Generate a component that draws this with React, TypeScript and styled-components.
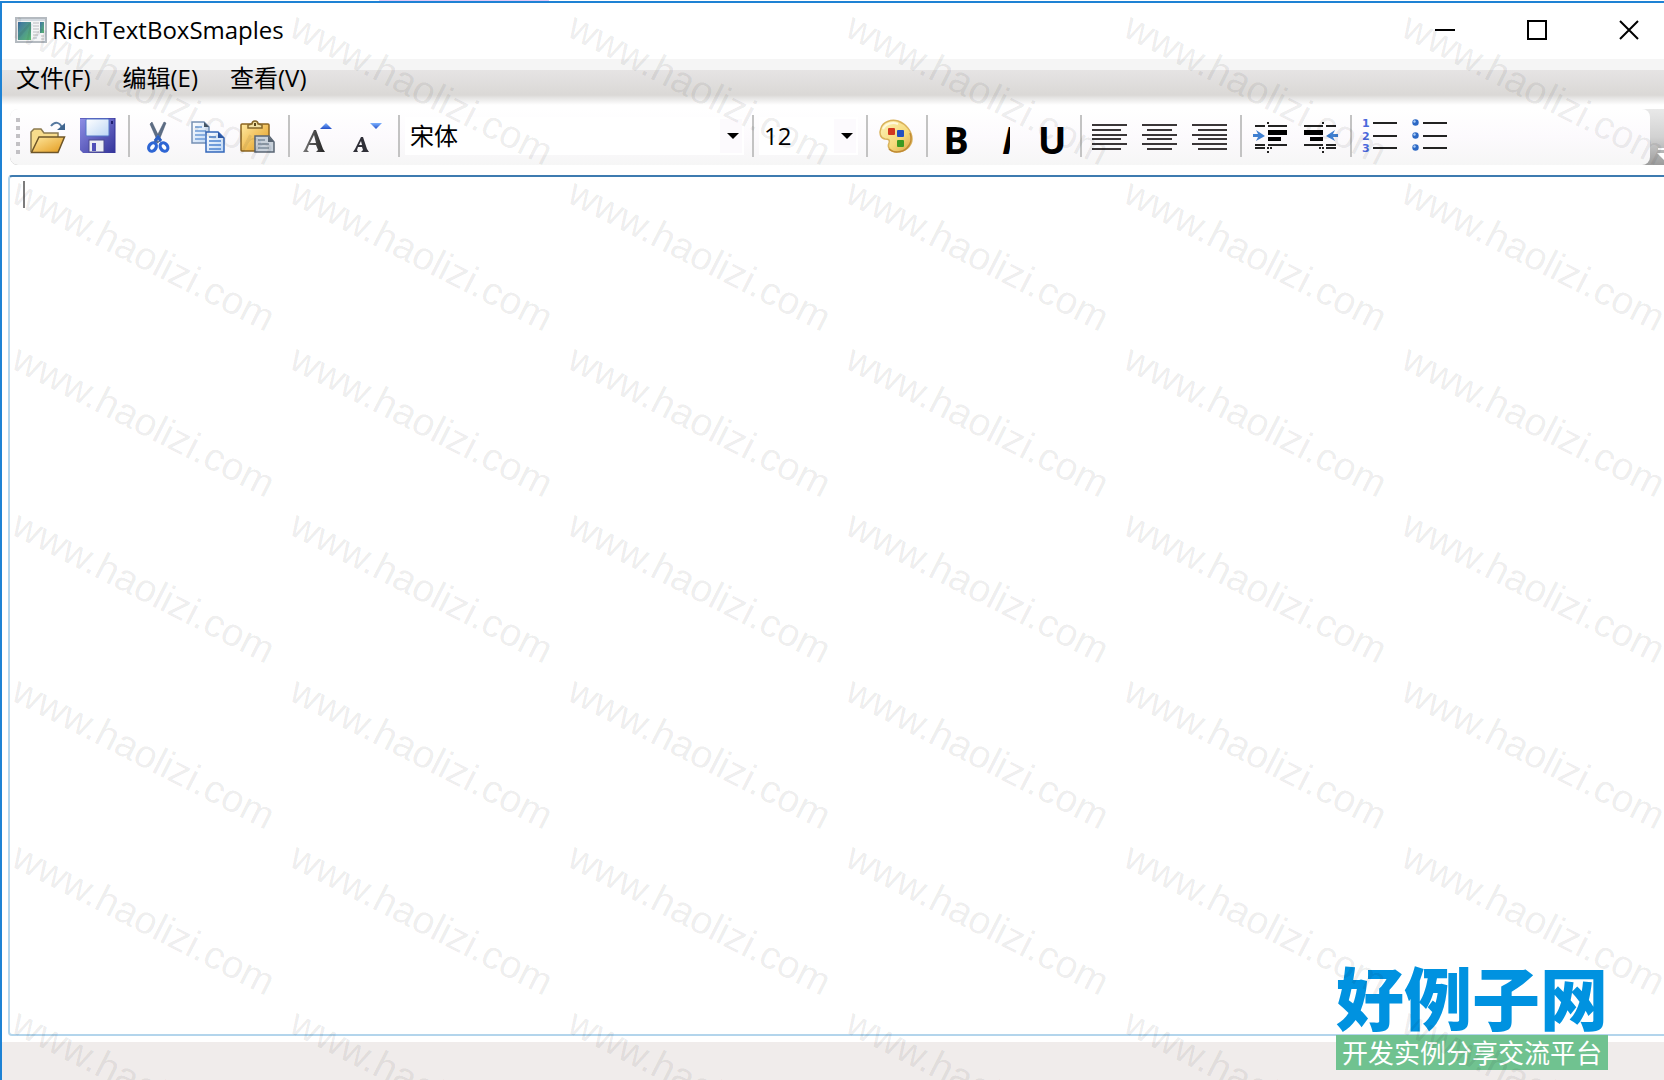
import React from 'react';
import styled, { createGlobalStyle } from 'styled-components';

const uiFont = '"Open Sans", "Noto Sans CJK SC", sans-serif';

const GlobalStyle = createGlobalStyle`
  *, *::before, *::after { box-sizing: border-box; }
  html, body { margin: 0; overflow: hidden; background: #fff; }
  body, button, select, textarea { font-family: ${uiFont}; font-size: 24px; color: #000; }
  button { border: 0; padding: 0; margin: 0; background: transparent; }
`;

const Desktop = styled.div`
  position: relative;
  height: 100vh;
  overflow: hidden;
  background: linear-gradient(#e2c9f5, #e2c9f5) 379px 0 / 170px 1px no-repeat #fff;
  padding-top: 1px;
`;

const Window = styled.div`
  display: flex;
  flex-direction: column;
  height: 100%;
  margin-right: -11px;
  border-top: 2px solid #1e82d4;
  border-left: 2px solid #1e82d4;
  background: #fff;
`;

const TitleBar = styled.header`
  display: flex;
  align-items: center;
  flex: none;
  height: 56px;
  padding: 0 0 2px 13px;
`;

const Title = styled.h1`
  flex: 1;
  margin: 0 0 0 5px;
  font-size: 24px;
  line-height: 32px;
  font-weight: 400;
`;

const CaptionButton = styled.button`
  display: grid;
  place-items: center;
  width: 92px;
  height: 54px;
`;

const MenuBar = styled.nav`
  display: flex;
  flex: none;
  height: 46px;
  padding: 0 0 8px 0;
  background: linear-gradient(#f5f5f5 0, #f5f5f5 11px, #e6e4e4 11px, #dad8d6 36px, #e6e5e4 39px, #fff 46px);
`;

const MenuItem = styled.button`
  padding: 0 18px 0 14px;
  line-height: 38px;
  white-space: nowrap;
`;

const ToolTray = styled.div`
  display: flex;
  flex: none;
  padding: 4px 0 10px 8px;
`;

const ToolBar = styled.div`
  display: flex;
  flex: 1;
  background: linear-gradient(#e9e9e9, #d2d2d2 50%, #9c9c9c);
  border-radius: 8px 0 0 8px;
`;

const ToolStrip = styled.div`
  display: flex;
  flex: 1;
  align-items: center;
  height: 56px;
  padding: 0 0 2px 6px;
  border-radius: 8px;
  background: linear-gradient(#fff, #fcfafd 50%, #f6f6f6);
`;

const Overflow = styled.button`
  display: grid;
  align-items: end;
  justify-items: start;
  width: 25px;
  padding: 0 0 3px 7px;
`;

const Grip = styled.div`
  display: grid;
  gap: 4px;
  margin-right: 3px;
  i { display: block; width: 4px; height: 4px; background: #c2c0c4; }
`;

const Divider = styled.div`
  flex: none;
  width: 2px;
  height: 42px;
  margin: 0 3px 0 5px;
  background: #c3c3c3;
`;

const ToolButton = styled.button<{ $letter?: boolean }>`
  display: grid;
  place-items: center;
  flex: none;
  width: ${(p) => (p.$letter ? 48 : 50)}px;
  height: 48px;
  font-size: 38px;
  line-height: 40px;
  font-weight: 700;
`;

const Letter = styled.span`
  margin: 6px 0 0 2px;
`;

const ClippedLetter = styled(Letter)`
  width: 12px;
  padding-left: 4px;
  overflow: hidden;
  font-style: italic;
`;

const Combo = styled.label<{ $width: number }>`
  display: grid;
  align-items: center;
  width: ${(p) => p.$width}px;
  padding: 0 3px 0 2px;
  > * { grid-area: 1 / 1; }
  svg { justify-self: end; margin-right: 5px; pointer-events: none; }
`;

const Select = styled.select`
  appearance: none;
  width: 100%;
  height: 38px;
  padding: 0 28px 2px 5px;
  border: 0;
  border-radius: 0;
  background: linear-gradient(#fcfafd, #fcfafd) right 2px center / 22px 34px no-repeat #fff;
`;

const EditorArea = styled.main`
  position: relative;
  display: flex;
  flex: 1;
  padding: 0 0 6px 6px;
`;

const Editor = styled.textarea`
  flex: 1;
  padding: 4px 12px;
  border: 2px solid #b3d5ec;
  border-top-color: #3e7bb0;
  border-radius: 4px;
  outline: 0;
  resize: none;
  background: #fff;
`;

const Caret = styled.i`
  position: absolute;
  left: 21px;
  top: 6px;
  width: 2px;
  height: 27px;
  background: #7c7c7c;
`;

const StatusBar = styled.footer`
  flex: none;
  height: 38px;
  background: #f0eceb;
`;

const Badge = styled.aside`
  position: absolute;
  right: 56px;
  bottom: 10px;
  width: 272px;
  text-align: center;
  font-family: "Noto Sans CJK SC", sans-serif;
  white-space: nowrap;
`;

const BadgeName = styled.div`
  font-size: 68px;
  line-height: 78px;
  font-weight: 900;
  color: #0092e0;
`;

const BadgeTag = styled.div`
  padding-bottom: 1px;
  font-size: 26px;
  line-height: 34px;
  color: #fff;
  background: #70c290;
`;

const Watermarks = styled.div`
  position: absolute;
  inset: 0;
  display: grid;
  grid-template-columns: repeat(6, 278px);
  grid-auto-rows: 166px;
  pointer-events: none;
  overflow: hidden;
`;

const Watermark = styled.span`
  padding-left: 8px;
  font: 39px/44px "Liberation Sans", sans-serif;
  color: rgba(0, 0, 0, 0.08);
  white-space: nowrap;
  transform: rotate(27deg);
  transform-origin: 8px 38px;
`;

const Art = ({ children, size = 36 }: { children: React.ReactNode; size?: number }) => (
  <svg width={size} height={size} viewBox={`0 0 ${size} ${size}`} aria-hidden="true">
    <defs>
      <linearGradient id="gold" x1="0" y1="0" x2="1" y2="1">
        <stop offset="0" stopColor="#ffe9a0" /><stop offset="1" stopColor="#e39a1c" />
      </linearGradient>
      <linearGradient id="cream" x1="0" y1="0" x2="1" y2="1">
        <stop offset="0" stopColor="#fdf3b8" /><stop offset=".6" stopColor="#f6da7c" /><stop offset="1" stopColor="#d9a440" />
      </linearGradient>
      <linearGradient id="violet" x1="0" y1="0" x2="1" y2="1">
        <stop offset="0" stopColor="#8f8fe6" /><stop offset="1" stopColor="#34349a" />
      </linearGradient>
      <linearGradient id="sheet" x1="0" y1="0" x2="1" y2="1">
        <stop offset="0" stopColor="#fff" /><stop offset="1" stopColor="#bcd6f5" />
      </linearGradient>
      <linearGradient id="blue" x1="0" y1="0" x2="0" y2="1">
        <stop offset="0" stopColor="#7db2ff" /><stop offset="1" stopColor="#2450c8" />
      </linearGradient>
      <linearGradient id="ink" x1="0" y1="0" x2="1" y2="0">
        <stop offset="0" stopColor="#777" /><stop offset="1" stopColor="#222" />
      </linearGradient>
    </defs>
    {children}
  </svg>
);

const AppIcon = () => (
  <svg width="32" height="26" viewBox="0 0 32 26" aria-hidden="true">
    <defs>
      <linearGradient id="pane" x1="0" y1="0" x2="1" y2="1">
        <stop offset="0" stopColor="#3f72a4" /><stop offset="1" stopColor="#5cba74" />
      </linearGradient>
    </defs>
    <rect x="1" y="1" width="30" height="24" fill="#f4f5f6" stroke="#b4bac0" strokeWidth="2" />
    <path d="M2 3h28" stroke="#d2d9e0" strokeWidth="2" />
    <rect x="3" y="5" width="13" height="18" fill="url(#pane)" />
    <path d="M18 6h6M18 9h6M18 12h6M18 15h6M18 18h5M18 21h4M26 19h3M26 22h3" stroke="#b9bcc0" />
    <rect x="25" y="5" width="4" height="11" fill="url(#pane)" />
  </svg>
);

const OpenIcon = () => (
  <Art>
    <path d="M1 34V14l3-3h7l3 4h14v5" fill="#f8dc8c" stroke="#8b7a50" strokeWidth="1.5" />
    <path d="M1.500 34.500 9 19h25.500L28 34.500z" fill="url(#gold)" stroke="#6e5528" strokeWidth="1.500" />
    <path d="M21 8c4-5 9-4 11 2" fill="none" stroke="#56789f" strokeWidth="2" />
    <path d="M27 12h8V5z" fill="#3f658f" />
  </Art>
);

const SaveIcon = () => (
  <Art>
    <path d="M0 0h35v35H3l-3-3z" fill="url(#violet)" />
    <path d="M0 0h35v35" fill="none" stroke="#34349a" />
    <rect x="6" y="1" width="23" height="17" rx="1" fill="url(#sheet)" stroke="#5277c8" />
    <rect x="31" y="3" width="2" height="3" fill="#202070" />
    <rect x="9" y="22" width="15" height="12" fill="#eceef4" stroke="#4a4a90" />
    <rect x="12" y="25" width="4" height="8" fill="#5050b8" />
  </Art>
);

const CutIcon = () => (
  <Art>
    <path d="M12 4 10 6l8 18 3-1zM24 4l2 1-8 20-4-1z" fill="#5d6e85" stroke="#40506a" strokeWidth=".5" />
    <path d="m15 23 3-4 3 4" fill="none" stroke="#2c5fc4" strokeWidth="3" />
    <ellipse cx="12.500" cy="29" rx="3.500" ry="4.500" transform="rotate(35 12.500 29)" fill="#fff" stroke="#2e66d4" strokeWidth="3.200" />
    <ellipse cx="24" cy="29" rx="3.500" ry="4.500" transform="rotate(-35 24 29)" fill="#fff" stroke="#2e66d4" strokeWidth="3.200" />
  </Art>
);

const CopyIcon = () => (
  <Art>
    <path d="M2 4h12l5 5v16H2z" fill="url(#sheet)" stroke="#7590b4" strokeWidth="1.500" />
    <path d="M14 4v5h5z" fill="#456" />
    <path d="M5 9h7M5 13h11M5 17h10M5 21h10" stroke="#6c9bd6" strokeWidth="1.500" />
    <path d="M16 14h12l6 6v14H16z" fill="url(#sheet)" stroke="#3568bb" strokeWidth="1.500" />
    <path d="M28 14v6h6z" fill="#2c57a4" />
    <path d="M19 19h7M19 23h12M19 27h12M19 31h12" stroke="#4c82cf" strokeWidth="1.500" />
  </Art>
);

const PasteIcon = () => (
  <Art>
    <rect x="1" y="6" width="28" height="27" rx="1" fill="url(#gold)" stroke="#8c6420" strokeWidth="1.500" />
    <path d="M8 10V7l4-1c0-4 6-4 6 0l4 1v3z" fill="#f3e2a4" stroke="#85672a" strokeWidth="1.500" />
    <rect x="14" y="5" width="2" height="3" fill="#5a481c" />
    <path d="M15 18h14l5 6v10H15z" fill="#c9d1da" stroke="#5a6674" strokeWidth="1.500" />
    <path d="M28 18v6h6z" fill="#5a6674" />
    <path d="M18 22h7M18 26h11M18 30h11" stroke="#7e8c9c" strokeWidth="1.500" />
  </Art>
);

const GrowIcon = () => (
  <Art>
    <path d="M14 12h2l7 19 2 3h-9l2-2-2-5H9l-2 5 2 2H3l2-3zm0 5-4 8h6z" fill="url(#ink)" fillRule="evenodd" />
    <path d="M20 11 26 5l6 6z" fill="url(#blue)" />
  </Art>
);

const ShrinkIcon = () => (
  <Art>
    <path d="M11 19h2l4 12 2 3h-8l2-2-1-3H8l-1 3 1 2H3l2-3zm0 4-2 4h3z" fill="#303038" fillRule="evenodd" />
    <path d="M20 5h12l-6 6z" fill="url(#blue)" />
  </Art>
);

const PaletteIcon = () => (
  <Art>
    <path d="M3 10C5 4 13 1 20 3c8 3 14 10 14 18 0 7-7 13-15 13-7 0-10-5-8-9 1-3 0-4-4-4C2 20 1 15 3 10z" fill="url(#cream)" stroke="#d9b25c" strokeWidth="1.500" />
    <path d="M11 31c4 4 13 4 18-1 4-4 5-10 3-15" fill="none" stroke="#c08a34" strokeWidth="1.500" />
    <path d="M5 11c3-6 10-7 15-5" fill="none" stroke="#fff9dc" strokeWidth="2" />
    <rect x="10" y="10" width="7" height="7" rx="1" fill="#d3371f" />
    <rect x="19" y="12" width="7" height="7" rx="1" fill="#2450c0" />
    <rect x="19" y="22" width="7" height="7" rx="1" fill="#3c9a22" />
  </Art>
);

const AlignIcon = ({ side }: { side: 'left' | 'center' | 'right' }) => {
  const start = { left: 0, center: 5, right: 6 }[side];
  const length = side === 'center' ? 25 : 29;
  return (
    <Art>
      {[7, 12, 17, 21, 26, 31].map((y, i) => (
        <path key={y} d={i % 2 ? `M${start} ${y}h${length}` : `M0 ${y}h35`} stroke="#3a3638" strokeWidth="2" />
      ))}
    </Art>
  );
};

const IndentIcon = ({ flip }: { flip?: boolean }) => (
  <Art>
    <g transform={flip ? 'translate(37 0) scale(-1 1)' : undefined}>
      <path d="M3 8h10M16 8h19M3 27h10M16 27h19M3 30h10" stroke="#222" strokeWidth="2" />
      <path d="M16 12h19v5H16zM16 19h13v4H16z" fill="#000" />
      <path d="M16 4v2M16 29v2M16 33v2M18 30h2" stroke="#222" strokeWidth="2" />
      <path d="M1 16h5l-2-4 9 6-9 5 2-4H1z" fill="#3f7fd0" />
    </g>
  </Art>
);

const Marker = styled.text`
  font: 700 11px "DejaVu Sans", sans-serif;
  fill: #4a68dc;
`;

const ListIcon = ({ numbered }: { numbered?: boolean }) => (
  <Art>
    {[5, 18, 30].map((y, i) => (
      <g key={y}>
        <path d={`M11 ${y}h24`} stroke="#222" strokeWidth="2" />
        {numbered ? <Marker x="0" y={y + 4}>{i + 1}</Marker> : (
          <>
            <circle cx="3.500" cy={y - 0.5} r="3.200" fill="#2c68c4" />
            <circle cx="2.500" cy={y - 1.5} r="1.200" fill="#a8ccf8" />
          </>
        )}
      </g>
    ))}
  </Art>
);

const Arrow = () => (
  <svg width="12" height="6" viewBox="0 0 12 6" aria-hidden="true"><path d="M0 0h12L6 6z" /></svg>
);

const Tool = ({ label, letter, children }: { label: string; letter?: boolean; children: React.ReactNode }) => (
  <ToolButton type="button" aria-label={label} $letter={letter}>{children}</ToolButton>
);

const CaptionGlyph = ({ d }: { d: string }) => (
  <svg width="20" height="20" viewBox="0 0 20 20" fill="none" stroke="#000" strokeWidth="2" aria-hidden="true"><path d={d} /></svg>
);

const menus = ['文件(F)', '编辑(E)', '查看(V)'];
const marks = Array.from({ length: 42 }, (_, i) => i);

export default function App() {
  return (
    <Desktop>
      <GlobalStyle />
      <Window>
        <TitleBar>
          <AppIcon />
          <Title>RichTextBoxSmaples</Title>
          <CaptionButton aria-label="Minimize"><CaptionGlyph d="M0 10h20" /></CaptionButton>
          <CaptionButton aria-label="Maximize"><CaptionGlyph d="M1 1h18v18H1z" /></CaptionButton>
          <CaptionButton aria-label="Close"><CaptionGlyph d="m1 1 18 18M19 1 1 19" /></CaptionButton>
        </TitleBar>
        <MenuBar>
          {menus.map((name) => <MenuItem key={name} type="button">{name}</MenuItem>)}
        </MenuBar>
        <ToolTray>
          <ToolBar role="toolbar">
            <ToolStrip>
              <Grip><i /><i /><i /><i /><i /></Grip>
              <Tool label="Open"><OpenIcon /></Tool>
              <Tool label="Save"><SaveIcon /></Tool>
              <Divider />
              <Tool label="Cut"><CutIcon /></Tool>
              <Tool label="Copy"><CopyIcon /></Tool>
              <Tool label="Paste"><PasteIcon /></Tool>
              <Divider />
              <Tool label="Grow font"><GrowIcon /></Tool>
              <Tool label="Shrink font"><ShrinkIcon /></Tool>
              <Divider />
              <Combo $width={344}>
                <Select aria-label="Font"><option>宋体</option></Select>
                <Arrow />
              </Combo>
              <Divider />
              <Combo $width={104}>
                <Select aria-label="Font size"><option>12</option></Select>
                <Arrow />
              </Combo>
              <Divider />
              <Tool label="Colour"><PaletteIcon /></Tool>
              <Divider />
              <Tool label="Bold" letter><Letter>B</Letter></Tool>
              <Tool label="Italic" letter><ClippedLetter>I</ClippedLetter></Tool>
              <Tool label="Underline" letter><Letter>U</Letter></Tool>
              <Divider />
              <Tool label="Align left"><AlignIcon side="left" /></Tool>
              <Tool label="Align centre"><AlignIcon side="center" /></Tool>
              <Tool label="Align right"><AlignIcon side="right" /></Tool>
              <Divider />
              <Tool label="Increase indent"><IndentIcon /></Tool>
              <Tool label="Decrease indent"><IndentIcon flip /></Tool>
              <Divider />
              <Tool label="Numbered list"><ListIcon numbered /></Tool>
              <Tool label="Bulleted list"><ListIcon /></Tool>
            </ToolStrip>
            <Overflow type="button" aria-label="More tools">
              <svg width="14" height="14" viewBox="0 0 14 14" fill="#fff" aria-hidden="true"><path d="M1 0h12v2H1zM0 5h14l-7 7z" /></svg>
            </Overflow>
          </ToolBar>
        </ToolTray>
        <EditorArea>
          <Editor aria-label="Document" spellCheck={false} />
          <Caret />
        </EditorArea>
        <StatusBar />
      </Window>
      <Badge>
        <BadgeName>好例子网</BadgeName>
        <BadgeTag>开发实例分享交流平台</BadgeTag>
      </Badge>
      <Watermarks aria-hidden="true">
        {marks.map((n) => <Watermark key={n}>www.haolizi.com</Watermark>)}
      </Watermarks>
    </Desktop>
  );
}
